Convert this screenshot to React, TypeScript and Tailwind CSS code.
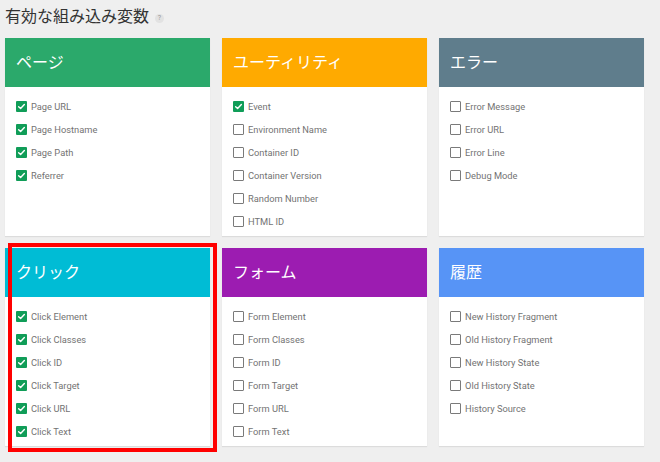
import React from 'react';

type Item = { label: string; checked: boolean };
type Group = { title: string; color: string; items: Item[] };

const GROUPS: Group[] = [
  {
    title: 'ページ',
    color: 'bg-[#2ba96b]',
    items: [
      { label: 'Page URL', checked: true },
      { label: 'Page Hostname', checked: true },
      { label: 'Page Path', checked: true },
      { label: 'Referrer', checked: true },
    ],
  },
  {
    title: 'ユーティリティ',
    color: 'bg-[#ffaa00]',
    items: [
      { label: 'Event', checked: true },
      { label: 'Environment Name', checked: false },
      { label: 'Container ID', checked: false },
      { label: 'Container Version', checked: false },
      { label: 'Random Number', checked: false },
      { label: 'HTML ID', checked: false },
    ],
  },
  {
    title: 'エラー',
    color: 'bg-[#5f7d8c]',
    items: [
      { label: 'Error Message', checked: false },
      { label: 'Error URL', checked: false },
      { label: 'Error Line', checked: false },
      { label: 'Debug Mode', checked: false },
    ],
  },
  {
    title: 'クリック',
    color: 'bg-[#00bcd5]',
    items: [
      { label: 'Click Element', checked: true },
      { label: 'Click Classes', checked: true },
      { label: 'Click ID', checked: true },
      { label: 'Click Target', checked: true },
      { label: 'Click URL', checked: true },
      { label: 'Click Text', checked: true },
    ],
  },
  {
    title: 'フォーム',
    color: 'bg-[#9c1cb1]',
    items: [
      { label: 'Form Element', checked: false },
      { label: 'Form Classes', checked: false },
      { label: 'Form ID', checked: false },
      { label: 'Form Target', checked: false },
      { label: 'Form URL', checked: false },
      { label: 'Form Text', checked: false },
    ],
  },
  {
    title: '履歴',
    color: 'bg-[#5794f6]',
    items: [
      { label: 'New History Fragment', checked: false },
      { label: 'Old History Fragment', checked: false },
      { label: 'New History State', checked: false },
      { label: 'Old History State', checked: false },
      { label: 'History Source', checked: false },
    ],
  },
];

function Checkbox({ checked }: { checked: boolean }) {
  if (checked) {
    return (
      <span className="flex h-[11px] w-[11px] shrink-0 items-center justify-center rounded-[1px] bg-[#109d58]">
        <svg viewBox="0 0 12 12" className="h-[9px] w-[9px]">
          <polyline points="2.2,6.2 4.8,8.6 9.8,3.4" fill="none" stroke="#fff" strokeWidth="1.9" strokeLinecap="round" strokeLinejoin="round" />
        </svg>
      </span>
    );
  }
  return <span className="h-[11px] w-[11px] shrink-0 rounded-[1px] border-[1.5px] border-[#7a7a7a] bg-white" />;
}

function Card({ group }: { group: Group }) {
  return (
    <div className="flex h-[198px] flex-col bg-white shadow-[0_1px_1px_rgba(0,0,0,0.08)]">
      <div className={`flex h-[49px] items-center px-[11px] text-[16px] text-white ${group.color}`}>
        {group.title}
      </div>
      <div className="flex flex-col gap-[12px] px-[11px] pt-[14px]">
        {group.items.map(item => (
          <div key={item.label} className="flex h-[11px] items-center gap-[4px]">
            <Checkbox checked={item.checked} />
            <span className="text-[9.3px] leading-none text-[#737373]">{item.label}</span>
          </div>
        ))}
      </div>
    </div>
  );
}

export default function App() {
  return (
    <div
      className="relative h-[462px] w-[660px] overflow-hidden bg-[#efefef] pl-[5px]"
      style={{ fontFamily: 'Roboto, "Noto Sans CJK JP", sans-serif' }}
    >
      <div className="flex h-[38px] items-center gap-[6px] pb-[4px]">
        <h1 className="text-[16px] font-normal text-[#333]">有効な組み込み変数</h1>
        <span className="mt-[3px] flex h-[9px] w-[9px] items-center justify-center rounded-full bg-[#e2e2e2] text-[7px] leading-none text-[#999]">?</span>
      </div>
      <div className="grid grid-cols-[205px_205px_205px] gap-x-[12px] gap-y-[12px]">
        {GROUPS.map(g => (
          <Card key={g.title} group={g} />
        ))}
      </div>
      <div className="pointer-events-none absolute left-[8px] top-[243px] h-[209px] w-[209px] border-4 border-[#ff0000]" />
    </div>
  );
}
